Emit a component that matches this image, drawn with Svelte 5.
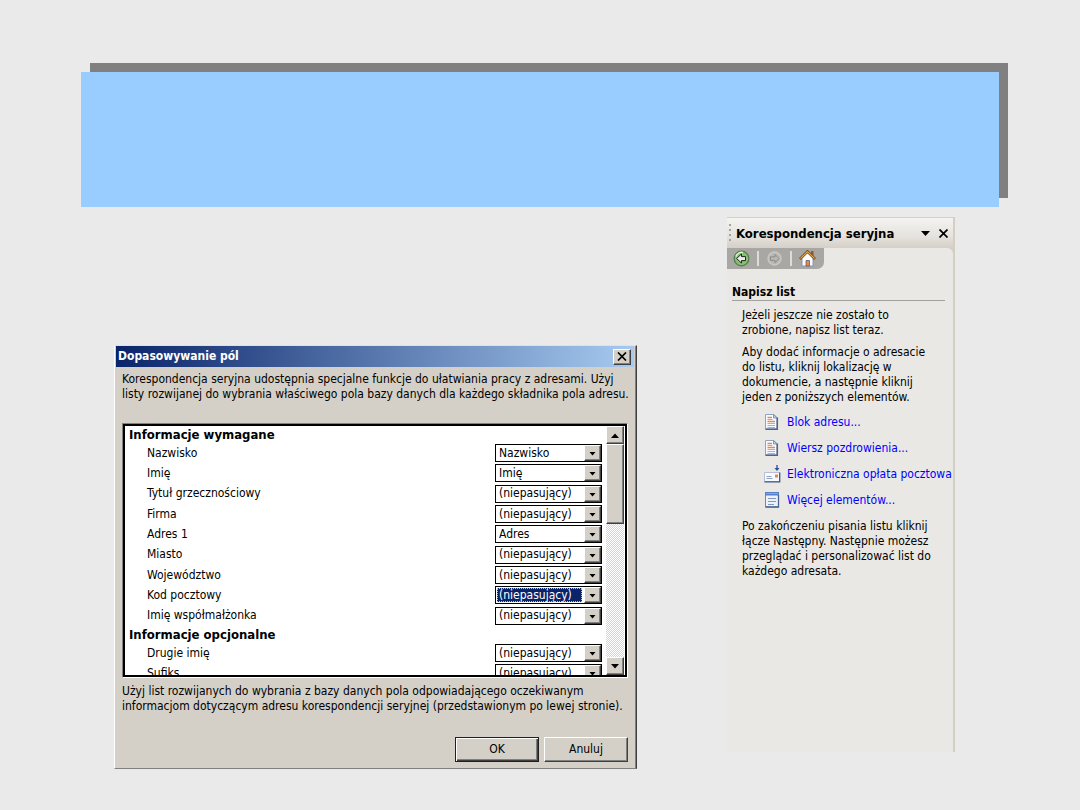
<script lang="ts">
	type Field = { id: string; label: string; value: string };

	const none = '(niepasujący)';

	const required: Field[] = [
		{ id: 'surname', label: 'Nazwisko', value: 'Nazwisko' },
		{ id: 'name', label: 'Imię', value: 'Imię' },
		{ id: 'title', label: 'Tytuł grzecznościowy', value: none },
		{ id: 'company', label: 'Firma', value: none },
		{ id: 'address', label: 'Adres 1', value: 'Adres' },
		{ id: 'city', label: 'Miasto', value: none },
		{ id: 'region', label: 'Województwo', value: none },
		{ id: 'zip', label: 'Kod pocztowy', value: none },
		{ id: 'spouse', label: 'Imię współmałżonka', value: none }
	];

	const optional: Field[] = [
		{ id: 'middle', label: 'Drugie imię', value: none },
		{ id: 'suffix', label: 'Sufiks', value: none }
	];

	const links = [
		{ icon: 'doc', text: 'Blok adresu...' },
		{ icon: 'doc', text: 'Wiersz pozdrowienia...' },
		{ icon: 'mail', text: 'Elektroniczna opłata pocztowa' },
		{ icon: 'list', text: 'Więcej elementów...' }
	];

	let active = $state('zip');
</script>

{#snippet fieldRow(field: Field)}
	<div class="field">
		<label for={field.id}>{field.label}</label>
		<span class="combo" class:active={active === field.id}>
			<select id={field.id} value={field.value} onfocus={() => (active = field.id)}>
				<option>{field.value}</option>
			</select>
			<span class="arrow">
				<svg width="7" height="4" viewBox="0 0 7 4"><path d="M.5 0h6l-3 3.6z" /></svg>
			</span>
		</span>
	</div>
{/snippet}

<main class="slide">
	<header class="banner"></header>

	<div class="content">
		<section class="dialog" aria-labelledby="dialog-title">
			<div class="titlebar">
				<h2 id="dialog-title">Dopasowywanie pól</h2>
				<button class="close" aria-label="Zamknij">
					<svg width="10" height="9" viewBox="0 0 10 9"><path d="M1 .5l8 8M9 .5l-8 8" stroke="#000" stroke-width="1.7" /></svg>
				</button>
			</div>

			<div class="dialog-body">
				<p class="intro">
					Korespondencja seryjna udostępnia specjalne funkcje do ułatwiania pracy z adresami. Użyj<br />
					listy rozwijanej do wybrania właściwego pola bazy danych dla każdego składnika pola adresu.
				</p>

				<div class="listbox">
					<div class="fields">
						<h3>Informacje wymagane</h3>
						<div class="group required">
							{#each required as field}
								{@render fieldRow(field)}
							{/each}
						</div>
						<h3>Informacje opcjonalne</h3>
						<div class="group">
							{#each optional as field}
								{@render fieldRow(field)}
							{/each}
						</div>
					</div>
					<div class="scrollbar">
						<button class="scroll-btn" aria-label="W górę">
							<svg width="8" height="5" viewBox="0 0 8 5"><path d="M0 5h8L4 .5z" /></svg>
						</button>
						<div class="thumb"></div>
						<div class="track"></div>
						<button class="scroll-btn" aria-label="W dół">
							<svg width="8" height="5" viewBox="0 0 8 5"><path d="M0 0h8L4 4.500z" /></svg>
						</button>
					</div>
				</div>

				<p>
					Użyj list rozwijanych do wybrania z bazy danych pola odpowiadającego oczekiwanym<br />
					informacjom dotyczącym adresu korespondencji seryjnej (przedstawionym po lewej stronie).
				</p>

				<div class="actions">
					<button class="btn default">OK</button>
					<button class="btn">Anuluj</button>
				</div>
			</div>
		</section>

		<aside class="pane">
			<div class="pane-head">
				<span class="grip"></span>
				<h2>Korespondencja seryjna</h2>
				<button class="plain" aria-label="Menu">
					<svg width="9" height="5" viewBox="0 0 9 5"><path d="M0 0h9L4.500 5z" /></svg>
				</button>
				<button class="plain" aria-label="Zamknij okienko">
					<svg width="9" height="9" viewBox="0 0 9 9"><path d="M.5 .5l8 8M8.500 .5l-8 8" stroke="#000" stroke-width="1.700" /></svg>
				</button>
			</div>

			<div class="pane-main">
				<nav class="toolbar">
					<button class="plain" aria-label="Wstecz">
						<svg width="17" height="17" viewBox="0 0 17 17">
							<circle cx="8.500" cy="8.500" r="7.300" fill="#86c172" stroke="#4d7d47" stroke-width="1.200" />
							<path d="M3 6.500a6 6 0 0 1 7-4" fill="none" stroke="#d9f2cf" stroke-width="1.500" />
							<path d="M3.500 8.500L8.500 4v2.600h4v4h-4V13z" fill="#e9efe6" stroke="#222" />
						</svg>
					</button>
					<span class="sep"></span>
					<button class="plain" aria-label="Dalej">
						<svg width="17" height="17" viewBox="0 0 17 17">
							<circle cx="8.500" cy="8.500" r="6.500" fill="#b9b8b4" stroke="#c9c8c4" stroke-width="1.400" />
							<path d="M13 8.500L9 4.500v2.300H4.500v3.600H9v2.300z" fill="#b9b8b4" stroke="#8b8a87" />
						</svg>
					</button>
					<span class="sep"></span>
					<button class="plain" aria-label="Strona główna">
						<svg width="17" height="17" viewBox="0 0 17 17">
							<path d="M12 1h2.500v6H12z" fill="#9a5a1c" />
							<path d="M3 8l5.500-5.500L14 8v8H3z" fill="#fff" stroke="#8796b4" />
							<path d="M7 10.500h3.500V16H7z" fill="#f0873d" stroke="#54617e" stroke-width="0.800" />
							<path d="M1 9l7.500-7.500L16 9" fill="none" stroke="#6b441a" stroke-width="2.600" />
							<path d="M1.500 8.500l7-7 7 7" fill="none" stroke="#e0a54a" stroke-width="1.200" />
						</svg>
					</button>
				</nav>

				<h3>Napisz list</h3>

				<div class="text">
					<p>Jeżeli jeszcze nie zostało to<br />zrobione, napisz list teraz.</p>
					<p>
						Aby dodać informacje o adresacie<br />do listu, kliknij lokalizację w<br />dokumencie, a następnie kliknij<br />jeden
						z poniższych elementów.
					</p>

					<ul>
						{#each links as link}
							<li>
								<svg width="17" height="18" viewBox="0 0 17 18">
									{#if link.icon === 'doc'}
										<path d="M1.500 1.500h8.500l3 3V16H1.500z" fill="#f8faff" stroke="#8fa3c4" />
										<path d="M13.300 4.500V16.300H1.500" fill="none" stroke="#4a6591" stroke-width="1.500" />
										<path d="M9.500 1.500v3.500H13z" fill="#c4d2e8" stroke="#6d86ae" stroke-width="0.800" />
										<path d="M3.500 4.500H8M3.500 8.500h7.500" stroke="#e58a4c" stroke-width="1.300" />
										<path d="M3.500 6.500h5M3.500 10.500h7.500M3.500 12.500h7.500M3.500 14.500h7.500" stroke="#a3b3cf" />
									{:else if link.icon === 'mail'}
										<path d="M.5 7.500h15v9H.5z" fill="#f8faff" stroke="#b4c0d5" />
										<path d="M15.700 7.500v9.300H.5" fill="none" stroke="#3f5685" stroke-width="1.300" />
										<path d="M2.500 11.500h5M2.500 13.500h6" stroke="#91a2c0" />
										<path d="M11 9.500h3v3h-3z" fill="#e58a4c" />
										<path d="M13 0v4" stroke="#294f9c" stroke-width="1.300" />
										<path d="M10.500 3h5L13 6z" fill="#294f9c" />
									{:else}
										<path d="M1.500 1.500h13V16h-13z" fill="#edf2fa" stroke="#7388ae" />
										<path d="M1 1h14v3.500H1z" fill="#5680c8" />
										<path d="M2.500 2.500h11" stroke="#b8cdf0" stroke-dasharray="1 1" />
										<path d="M4 7.500h8M4 10.500h8M4 13.500h6" stroke="#8199bd" stroke-width="1.200" />
										<path d="M14.500 4v12H1.500" fill="none" stroke="#4a6591" stroke-width="1.300" />
									{/if}
								</svg>
								<a href="#{link.icon}">{link.text}</a>
							</li>
						{/each}
					</ul>

					<p>
						Po zakończeniu pisania listu kliknij<br />łącze Następny. Następnie możesz<br />przeglądać i personalizować list do<br />każdego
						adresata.
					</p>
				</div>
			</div>
		</aside>
	</div>
</main>

<style>
	:global(body) {
		background: #eaeaea;
	}

	.slide {
		padding: 72px 81px 41px;
		font-family: 'DejaVu Sans Condensed', 'DejaVu Sans', Tahoma, sans-serif;
		font-size: 12px;
		line-height: 15px;
		color: #000;
	}

	h2,
	h3,
	p,
	ul {
		margin: 0;
		padding: 0;
		font-size: 12px;
	}

	button,
	select {
		font: inherit;
		color: inherit;
		margin: 0;
		padding: 0;
		border-radius: 0;
	}

	button {
		display: flex;
		align-items: center;
		justify-content: center;
	}

	svg {
		display: block;
		flex: none;
	}

	.banner {
		height: 135px;
		background: #99ccff;
		box-shadow: 9px -9px 0 #808080;
	}

	.content {
		display: grid;
		grid-template-columns: minmax(0, 523fr) minmax(0, 228fr);
		column-gap: 90px;
		align-items: start;
		padding: 10px 44px 0 33px;
	}

	.dialog {
		margin-top: 128px;
		background: #d4d0c8;
		border: 1px solid;
		border-color: #e4e1d6 #404040 #808080 #fff;
		box-shadow: inset -1px 0 #808080;
	}

	.titlebar {
		display: flex;
		align-items: center;
		justify-content: space-between;
		height: 21px;
		margin: 0 2px 0 1px;
		padding: 0 3px 0 2px;
		background: linear-gradient(to right, #0a246a, #a6caf0);
		color: #fff;
	}

	.close {
		width: 18px;
		height: 16px;
	}

	.close,
	.scroll-btn,
	.thumb,
	.arrow,
	.btn {
		box-sizing: border-box;
		background: #d4d0c8;
		border: 1px solid;
		border-color: #fff #404040 #404040 #fff;
		box-shadow: inset -1px -1px #808080;
	}

	.dialog-body {
		padding: 5px 8px 6px 7px;
		white-space: nowrap;
	}

	.listbox {
		display: flex;
		box-sizing: border-box;
		height: 255px;
		margin: 21px 0 6px;
		border: 1px solid;
		border-color: #808080 #fff #fff #808080;
		outline: 2px solid #000;
		outline-offset: -3px;
		padding: 2px 3px 2px 2px;
		background: #fff;
	}

	.fields {
		flex: 1;
		overflow: hidden;
		padding: 0 4px;
	}

	.fields h3 {
		font-size: 13px;
		line-height: 17px;
	}

	.group {
		display: grid;
		grid-auto-rows: 20px;
	}

	.group.required {
		height: 183px;
		grid-auto-rows: 1fr;
	}

	.field {
		display: flex;
		align-items: center;
		justify-content: space-between;
		padding-left: 18px;
	}

	.combo {
		position: relative;
		box-sizing: border-box;
		width: 107px;
		height: 18px;
		border: 1px solid #000;
		background: #fff;
	}

	.combo select {
		appearance: none;
		display: block;
		width: 100%;
		height: 16px;
		padding-left: 3px;
		border: none;
		outline: none;
		background: none;
	}

	.combo.active select {
		width: 87px;
		border: 1px solid #fff;
		padding-left: 2px;
		background: #0a246a;
		color: #fff;
		outline: 1px dotted #d8c25a;
		outline-offset: -2px;
	}

	.arrow {
		position: absolute;
		top: 0;
		right: 0;
		display: flex;
		align-items: center;
		justify-content: center;
		width: 17px;
		height: 16px;
		padding-top: 2px;
		pointer-events: none;
	}

	.scrollbar {
		display: flex;
		flex-direction: column;
		width: 18px;
	}

	.scroll-btn {
		width: 100%;
		height: 18px;
	}

	.thumb {
		height: 80px;
	}

	.track {
		flex: 1;
		background: repeating-conic-gradient(#d8d5ce 0 25%, #fff 0 50%) 0 0 / 2px 2px;
	}

	.actions {
		display: flex;
		justify-content: flex-end;
		gap: 5px;
		margin-top: 23px;
	}

	.btn {
		width: 84px;
		height: 25px;
	}

	.btn.default {
		border-color: #202020;
		box-shadow:
			inset 1px 1px #fff,
			inset -1px -1px #404040,
			inset -2px -2px #808080;
	}

	.pane {
		box-sizing: border-box;
		min-height: 535px;
		border-top: 1px solid #d4cfc4;
		border-right: 2px solid #d4cfc4;
		background: #d4cfc7;
		white-space: nowrap;
	}

	.pane-head {
		display: flex;
		align-items: center;
		height: 30px;
		padding: 0 5px 0 2px;
		gap: 9px;
		background: linear-gradient(#f4f3f0, #e6e3de 60%, #d4cfc7);
	}

	.pane-head h2 {
		flex: 1;
		margin-left: -4px;
		font-size: 13px;
	}

	.grip {
		width: 2px;
		height: 18px;
		background: repeating-linear-gradient(#a5a29b 0 2px, transparent 2px 5px);
	}

	.plain {
		border: none;
		background: none;
	}

	.pane-main {
		min-height: 504px;
		overflow: hidden;
		border-top-right-radius: 6px;
		background: #e9e8e4;
	}

	.toolbar {
		display: flex;
		align-items: center;
		gap: 7px;
		box-sizing: border-box;
		width: 97px;
		height: 21px;
		padding-left: 6px;
		border-bottom-right-radius: 7px;
		background: #a8a7a4;
	}

	.sep {
		width: 2px;
		height: 15px;
		background: #dedcd7;
	}

	.pane-main h3 {
		margin: 16px 8px 7px 5px;
		border-bottom: 1px solid #a3a29f;
	}

	.text {
		padding-left: 15px;
	}

	.text p + p {
		margin-top: 7px;
	}

	ul {
		margin: 4px 0 6px 22px;
		list-style: none;
	}

	li {
		display: flex;
		align-items: center;
		gap: 6px;
		height: 26px;
	}

	a {
		color: #0000ff;
		text-decoration: none;
	}
</style>
